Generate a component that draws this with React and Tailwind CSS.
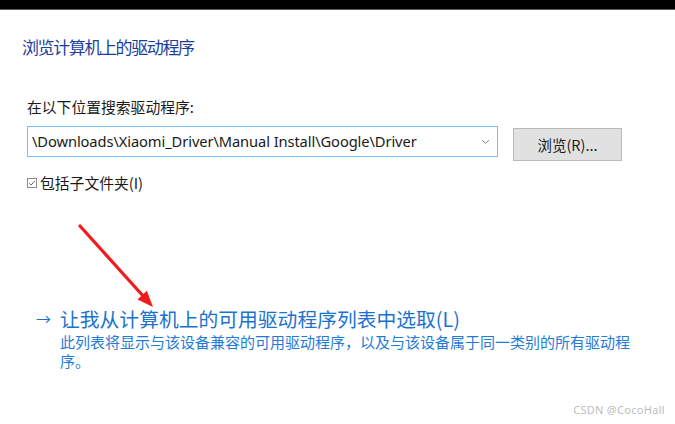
const CJK = { fontFamily: '"Noto Sans CJK SC", "Noto Sans", sans-serif' }
const UI = { fontFamily: '"Noto Sans", "Noto Sans CJK SC", sans-serif' }

function ChevronDown() {
  return (
    <svg width="9" height="6" viewBox="0 0 9 6" fill="none">
      <path d="M1 1l3.5 3.5L8 1" stroke="#8a8a8a" strokeWidth="1" />
    </svg>
  )
}

function RedArrow() {
  return (
    <svg className="absolute left-0 top-0 pointer-events-none" width="675" height="424" viewBox="0 0 675 424">
      <line x1="80" y1="226" x2="144" y2="297" stroke="#f01c1c" strokeWidth="3.2" strokeLinecap="round" />
      <polygon points="153,307 137.5,299.5 146.8,290.8" fill="#f01c1c" />
    </svg>
  )
}

export default function App() {
  return (
    <div className="relative w-[675px] h-[424px] bg-white overflow-hidden" style={CJK}>
      {/* window top edge */}
      <div className="h-[9px] bg-black" />
      <div className="h-px bg-[#5a5a5a]" />

      <div className="pl-[22px]">
        <div className="mt-[25px] text-[17px] leading-[24px] tracking-[-1.4px] text-[#1b3f9d]">浏览计算机上的驱动程序</div>

        <div className="pl-[5px]">
          <div className="mt-[38px] text-[14.8px] leading-[20px] text-[#1a1a1a]">在以下位置搜索驱动程序:</div>

          <div className="mt-[9px] flex items-start gap-[15px]">
            <div className="w-[471px] h-[31px] border border-[#7fbcef] bg-white flex items-center justify-between pl-[4px] pr-[7px]">
              <span className="text-[14.7px] text-[#1a1a1a] tracking-[-0.1px]" style={UI}>
                \Downloads\Xiaomi_Driver\Manual Install\Google\Driver
              </span>
              <ChevronDown />
            </div>
            <button className="mt-[2px] w-[109px] h-[33px] bg-[#e1e1e1] border border-[#b9b9b9] text-[14.5px] text-[#1a1a1a] flex items-center justify-center">
              浏览(R)...
            </button>
          </div>

          <div className="mt-[12px] flex items-center gap-[3px] text-[14.8px] leading-[20px] text-[#1a1a1a]">
            <span className="w-[10px] h-[10px] border border-[#8c8c8c] flex items-center justify-center">
              <svg width="8" height="8" viewBox="0 0 8 8" fill="none">
                <path d="M1.3 4.2l1.8 1.8 3.6-4" stroke="#555" strokeWidth="0.9" />
              </svg>
            </span>
            <span>包括子文件夹(I)</span>
          </div>
        </div>

        <div className="mt-[114px] flex items-start">
          <div className="w-[38px] pl-[14px] text-[15px] leading-[24px] text-[#1a73d0]" style={UI}>→</div>
          <div>
            <div className="text-[19.8px] leading-[24px] text-[#1a73d0]">让我从计算机上的可用驱动程序列表中选取(L)</div>
            <div className="mt-[1px] text-[15px] leading-[19px] text-[#1f7cd6]">
              此列表将显示与该设备兼容的可用驱动程序，以及与该设备属于同一类别的所有驱动程
              <br />
              序。
            </div>
          </div>
        </div>
      </div>

      <div className="absolute right-[10px] bottom-[6px] text-[11px] text-[#bdbdbd] tracking-[0.3px]" style={UI}>
        CSDN @CocoHall
      </div>

      <RedArrow />
    </div>
  )
}
